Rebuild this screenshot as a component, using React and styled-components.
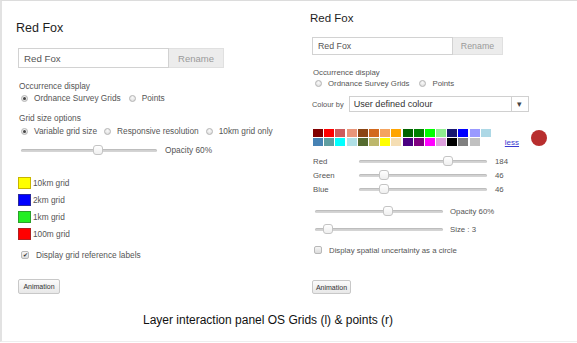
import styled, { createGlobalStyle } from 'styled-components';

const GlobalStyle = createGlobalStyle`
  html, body {
    margin: 0;
    padding: 0;
    background: #fff;
  }
  body {
    font-family: 'Liberation Sans', Arial, sans-serif;
  }
`;

const LEGEND = [
  { color: '#ffff00', border: '#c8b400', label: '10km grid' },
  { color: '#0000ff', border: '#2a2a9a', label: '2km grid' },
  { color: '#22ee22', border: '#2aa02a', label: '1km grid' },
  { color: '#ff0000', border: '#b02020', label: '100m grid' },
];

const PALETTE = [
  ['#800000', '#ff0000', '#cd5c5c', '#e9967a', '#8b4513', '#d2691e', '#f4a460', '#ffa500',
    '#006400', '#008000', '#00ff00', '#90ee90', '#191970', '#0000ff', '#9999ff', '#add8e6'],
  ['#4682b4', '#5f9ea0', '#00ffff', '#b0e0e6', '#556b2f', '#bdb76b', '#ffff00', '#f5deb3',
    '#4b0082', '#800080', '#ff00ff', '#dda0dd', '#000000', '#808080', '#c0c0c0'],
];

const Slider = ({ width, pos }) => (
  <Track $w={width}>
    <Thumb style={{ left: pos - 5 }} />
  </Track>
);

const App = () => {
  return (
    <>
      <GlobalStyle />
      <Frame>
        <Panels>
          <LeftPanel>
            <Title $size={12.5} $mt={20}>Red Fox</Title>
            <InputRow $mt={13} $h={20}>
              <NameInput $w={151} $size={9.7}>Red Fox</NameInput>
              <RenameButton $w={55} $size={9.5}>Rename</RenameButton>
            </InputRow>
            <Label $size={8.3} $mt={12}>Occurrence display</Label>
            <RadioRow $size={8.3}>
              <Radio $checked />
              <span>Ordnance Survey Grids</span>
              <Radio $gap={8} />
              <span>Points</span>
            </RadioRow>
            <Label $size={8.3} $mt={8}>Grid size options</Label>
            <RadioRow $size={8.3} $mt={1}>
              <Radio $checked />
              <span>Variable grid size</span>
              <Radio $gap={7} />
              <span>Responsive resolution</span>
              <Radio $gap={7} />
              <span>10km grid only</span>
            </RadioRow>
            <SliderRow $size={8.3} $mt={7} $pl={5}>
              <Slider width={136} pos={77} />
              <SliderText $ml={8}>Opacity 60%</SliderText>
            </SliderRow>
            <Legend>
              {LEGEND.map((l) => (
                <LegendRow key={l.label}>
                  <Swatch $color={l.color} $border={l.border} />
                  <span>{l.label}</span>
                </LegendRow>
              ))}
            </Legend>
            <CheckRow $size={8.3} $mt={9}>
              <CheckBox $checked>✔</CheckBox>
              <span>Display grid reference labels</span>
            </CheckRow>
            <AnimButton $mt={18} $w={42} $h={15} $ml={2}>Animation</AnimButton>
          </LeftPanel>

          <RightPanel>
            <Title $size={11.5} $mt={10}>Red Fox</Title>
            <InputRow $mt={12} $h={18}>
              <NameInput $w={141} $size={8.8}>Red Fox</NameInput>
              <RenameButton $w={50} $size={8.8}>Rename</RenameButton>
            </InputRow>
            <Label $size={7.8} $mt={12}>Occurrence display</Label>
            <RadioRow $size={7.8} $mt={-2}>
              <Radio />
              <span>Ordnance Survey Grids</span>
              <Radio $gap={10} />
              <span>Points</span>
            </RadioRow>
            <ColourRow $mt={7}>
              <ColourLabel>Colour by</ColourLabel>
              <Select>
                <SelectText>User defined colour</SelectText>
                <SelectArrow>▾</SelectArrow>
              </Select>
            </ColourRow>
            <PaletteRow $mt={17}>
              <Palette>
                {PALETTE.map((row, i) => (
                  <PaletteLine key={i}>
                    {row.map((c) => (
                      <Chip key={c} $color={c} />
                    ))}
                  </PaletteLine>
                ))}
              </Palette>
              <LessLink>less</LessLink>
              <ColourDot $color="rgb(184, 46, 46)" />
            </PaletteRow>
            <RgbRows>
              {[
                ['Red', 184, 89],
                ['Green', 46, 25],
                ['Blue', 46, 25],
              ].map(([name, value, pos]) => (
                <SliderRow key={name} $size={7.8} $pl={3}>
                  <RgbName>{name}</RgbName>
                  <Slider width={128} pos={pos} />
                  <SliderText $ml={8}>{value}</SliderText>
                </SliderRow>
              ))}
            </RgbRows>
            <SliderRow $size={7.8} $mt={10} $pl={5}>
              <Slider width={128} pos={73} />
              <SliderText $ml={7}>Opacity 60%</SliderText>
            </SliderRow>
            <SliderRow $size={7.8} $mt={6} $pl={5}>
              <Slider width={128} pos={13} />
              <SliderText $ml={7}>Size : 3</SliderText>
            </SliderRow>
            <CheckRow $size={7.8} $mt={9} $pl={4}>
              <CheckBox />
              <span>Display spatial uncertainty as a circle</span>
            </CheckRow>
            <AnimButton $mt={24} $w={39} $h={14} $ml={2}>Animation</AnimButton>
          </RightPanel>
        </Panels>
        <Caption>Layer interaction panel OS Grids (l) &amp; points (r)</Caption>
      </Frame>
    </>
  );
};

export default App;

const Frame = styled.div`
  box-sizing: border-box;
  width: 577px;
  height: 342px;
  border-top: 1px solid #dcdcdc;
  border-left: 2px solid #e2e2e2;
  border-bottom: 1px solid #eeeeee;
  display: flex;
  flex-direction: column;
`;

const Panels = styled.div`
  display: flex;
  align-items: flex-start;
`;

const LeftPanel = styled.div`
  width: 294px;
  padding-left: 14px;
  display: flex;
  flex-direction: column;
  align-items: flex-start;
`;

const RightPanel = styled.div`
  flex: 1;
  display: flex;
  flex-direction: column;
  align-items: flex-start;
`;

const Title = styled.div`
  margin-top: ${({ $mt }) => $mt}px;
  font-size: ${({ $size }) => $size}px;
  line-height: 14px;
  color: #1e1e1e;
`;

const InputRow = styled.div`
  display: flex;
  margin-top: ${({ $mt }) => $mt}px;
  margin-left: 2px;
  height: ${({ $h }) => $h}px;
`;

const NameInput = styled.div`
  box-sizing: border-box;
  width: ${({ $w }) => $w}px;
  border: 1px solid #d2d2d2;
  padding-left: 5px;
  display: flex;
  align-items: center;
  font-size: ${({ $size }) => $size}px;
  color: #555;
`;

const RenameButton = styled.div`
  box-sizing: border-box;
  width: ${({ $w }) => $w}px;
  background: #ececec;
  border: 1px solid #e0e0e0;
  border-left: none;
  display: flex;
  align-items: center;
  justify-content: center;
  font-size: ${({ $size }) => $size}px;
  color: #9a9a9a;
`;

const Label = styled.div`
  margin-top: ${({ $mt = 0 }) => $mt}px;
  margin-left: 3px;
  font-size: ${({ $size }) => $size}px;
  line-height: 12px;
  color: #555;
`;

const RadioRow = styled.div`
  display: flex;
  align-items: center;
  margin-top: ${({ $mt = 0 }) => $mt}px;
  margin-left: 5px;
  height: 12px;
  font-size: ${({ $size }) => $size}px;
  color: #555;
`;

const Radio = styled.span`
  box-sizing: border-box;
  width: 7px;
  height: 7px;
  border-radius: 50%;
  border: 1px solid #b4b4b4;
  background: radial-gradient(circle at 50% 35%, #fafafa, #d8d8d8);
  margin-left: ${({ $gap = 0 }) => $gap}px;
  margin-right: 6px;
  display: flex;
  align-items: center;
  justify-content: center;

  &::after {
    content: '';
    display: ${({ $checked }) => ($checked ? 'block' : 'none')};
    width: 3px;
    height: 3px;
    border-radius: 50%;
    background: #444;
  }
`;

const SliderRow = styled.div`
  display: flex;
  align-items: center;
  height: 12px;
  margin-top: ${({ $mt = 0 }) => $mt}px;
  padding-left: ${({ $pl = 0 }) => $pl}px;
  font-size: ${({ $size }) => $size}px;
  color: #555;
`;

const Track = styled.div`
  position: relative;
  width: ${({ $w }) => $w}px;
  height: 3px;
  border-radius: 2px;
  background: #d4d4d4;
  box-shadow: inset 0 1px 1px rgba(0, 0, 0, 0.12);
`;

const Thumb = styled.span`
  position: absolute;
  top: -4px;
  box-sizing: border-box;
  width: 10px;
  height: 10px;
  border-radius: 3px;
  border: 1px solid #c4c4c4;
  background: linear-gradient(#ffffff, #efefef);
`;

const SliderText = styled.span`
  margin-left: ${({ $ml }) => $ml}px;
`;

const Legend = styled.div`
  margin-top: 20px;
  margin-left: 2px;
  display: flex;
  flex-direction: column;
  gap: 4px;
`;

const LegendRow = styled.div`
  display: flex;
  align-items: center;
  height: 13px;
  font-size: 8.3px;
  color: #555;
`;

const Swatch = styled.span`
  box-sizing: border-box;
  width: 13px;
  height: 12px;
  background: ${({ $color }) => $color};
  border: 1px solid ${({ $border }) => $border};
  margin-right: 2px;
`;

const CheckRow = styled.div`
  display: flex;
  align-items: center;
  height: 12px;
  margin-top: ${({ $mt }) => $mt}px;
  padding-left: ${({ $pl = 5 }) => $pl}px;
  font-size: ${({ $size }) => $size}px;
  color: #555;
`;

const CheckBox = styled.span`
  box-sizing: border-box;
  width: 8px;
  height: 8px;
  border-radius: 2px;
  border: 1px solid #b8b8b8;
  background: linear-gradient(#f6f6f6, #dcdcdc);
  margin-right: 7px;
  display: flex;
  align-items: center;
  justify-content: center;
  font-size: 6px;
  line-height: 1;
  color: #333;
`;

const AnimButton = styled.div`
  box-sizing: border-box;
  margin-top: ${({ $mt }) => $mt}px;
  margin-left: ${({ $ml }) => $ml}px;
  width: ${({ $w }) => $w}px;
  height: ${({ $h }) => $h}px;
  border: 1px solid #c8c8c8;
  border-radius: 2px;
  background: linear-gradient(#fbfbfb, #e8e8e8);
  display: flex;
  align-items: center;
  justify-content: center;
  font-size: 7px;
  color: #333;
`;

const ColourRow = styled.div`
  display: flex;
  align-items: center;
  margin-top: ${({ $mt }) => $mt}px;
  margin-left: 2px;
`;

const ColourLabel = styled.span`
  font-size: 7.4px;
  color: #555;
  margin-right: 5px;
`;

const Select = styled.div`
  box-sizing: border-box;
  width: 180px;
  height: 16px;
  border: 1px solid #d0d0d0;
  display: flex;
  align-items: center;
`;

const SelectText = styled.span`
  flex: 1;
  padding-left: 4px;
  font-size: 9.1px;
  color: #333;
`;

const SelectArrow = styled.span`
  width: 16px;
  height: 100%;
  border-left: 1px solid #d0d0d0;
  display: flex;
  align-items: center;
  justify-content: center;
  font-size: 9px;
  color: #444;
`;

const PaletteRow = styled.div`
  display: flex;
  align-items: flex-start;
  margin-top: ${({ $mt }) => $mt}px;
  margin-left: 3px;
`;

const Palette = styled.div`
  display: flex;
  flex-direction: column;
  gap: 1px;
`;

const PaletteLine = styled.div`
  display: flex;
  gap: 1.2px;
`;

const Chip = styled.span`
  width: 10px;
  height: 8px;
  background: ${({ $color }) => $color};
`;

const LessLink = styled.span`
  margin-left: 14px;
  margin-top: 9px;
  font-size: 8px;
  color: #3a3ad0;
  text-decoration: underline;
`;

const ColourDot = styled.span`
  margin-left: 12px;
  margin-top: 1px;
  width: 16px;
  height: 16px;
  border-radius: 50%;
  background: ${({ $color }) => $color};
`;

const RgbRows = styled.div`
  margin-top: 8px;
  display: flex;
  flex-direction: column;
  gap: 2px;
`;

const RgbName = styled.span`
  width: 46px;
`;

const Caption = styled.div`
  margin-top: 19px;
  padding-left: 141px;
  font-size: 12px;
  line-height: 14px;
  color: #111;
`;
